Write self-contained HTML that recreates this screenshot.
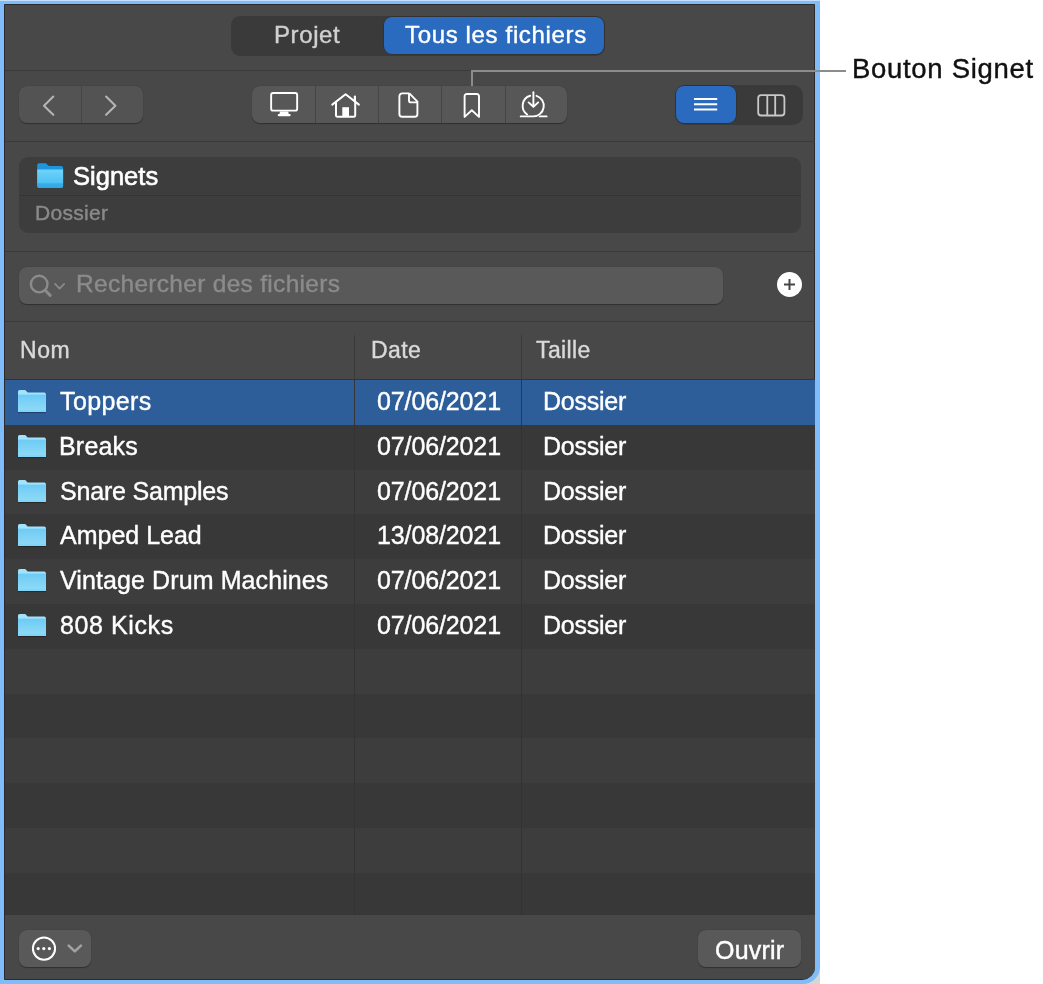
<!DOCTYPE html>
<html><head><meta charset="utf-8">
<style>
*{margin:0;padding:0;box-sizing:border-box}
html,body{width:1043px;height:984px;overflow:hidden;background:#fff;font-family:"Liberation Sans",sans-serif;position:relative}
.a{position:absolute}
.t{position:absolute;white-space:nowrap;line-height:1;will-change:transform;-webkit-text-stroke:0.4px currentColor}
.ic{position:absolute;overflow:visible}
</style></head><body>
<div class="a" style="left:804px;top:966px;width:16px;height:18px;background:#d6d6d6;"></div>
<div class="a" style="left:0px;top:0px;width:820px;height:984px;background:#80bcf9;border-bottom-right-radius:17px"></div>
<div class="a" style="left:0px;top:0px;width:820px;height:1px;background:#c6dffb;"></div>
<div class="a" style="left:4px;top:4px;width:811px;height:976px;background:#484848;border:1px solid #2b2b2b;border-bottom-right-radius:13px"></div>
<div class="a" style="left:231px;top:16px;width:374px;height:40px;background:#3a3a3a;border-radius:9px"></div>
<div class="t" style="left:274px;top:23.28px;font-size:24px;color:#d0d0d0;letter-spacing:0.6px">Projet</div>
<div class="a" style="left:384px;top:17px;width:220px;height:37px;background:#2a6bbf;border-radius:8px;box-shadow:0 0 0 0.5px #2a2a2a"></div>
<div class="t" style="left:404.5px;top:23.28px;font-size:24px;color:#ffffff;letter-spacing:0.65px">Tous les fichiers</div>
<div class="a" style="left:5px;top:70px;width:810px;height:1px;background:#3a3a3a;"></div>
<div class="a" style="left:19px;top:86px;width:124px;height:37px;background:#535353;border-radius:8px;box-shadow:0 0.5px 1px rgba(0,0,0,.35)"></div>
<div class="a" style="left:81px;top:86px;width:1px;height:37px;background:#444444;"></div>
<svg class="ic" style="left:35px;top:88px" width="90" height="34" viewBox="0 0 90 34"><path d="M18.3 8.6L9 17.7L18.3 26.8M71.1 8.6L80.4 17.7L71.1 26.8" fill="none" stroke="#b4b4b4" stroke-width="2.1" stroke-linecap="round" stroke-linejoin="round"/></svg>
<div class="a" style="left:252px;top:86px;width:315px;height:37px;background:#575757;border-radius:8px;box-shadow:0 0.5px 1px rgba(0,0,0,.35)"></div>
<div class="a" style="left:315px;top:86px;width:1px;height:37px;background:#444444;"></div>
<div class="a" style="left:378px;top:86px;width:1px;height:37px;background:#444444;"></div>
<div class="a" style="left:441px;top:86px;width:1px;height:37px;background:#444444;"></div>
<div class="a" style="left:505px;top:86px;width:1px;height:37px;background:#444444;"></div>
<svg class="ic" style="left:268px;top:90px" width="32" height="30" viewBox="0 0 32 30"><rect x="3.15" y="2.95" width="26" height="17.7" rx="2" fill="none" stroke="#fff" stroke-width="1.9"/><path d="M12 21.5h8.2l0.6 3h-9.4z" fill="#fff"/><rect x="9.7" y="24" width="13" height="2.2" rx="1.1" fill="#fff"/></svg>
<svg class="ic" style="left:326px;top:88px" width="40" height="34" viewBox="0 0 40 34"><path d="M6.3 16.6L19.6 6.3L32.9 16.6" fill="none" stroke="#fff" stroke-width="2" stroke-linecap="round" stroke-linejoin="round"/><path d="M28.9 8.6v4" stroke="#fff" stroke-width="2.2" stroke-linecap="round"/><path d="M10 13.5V27.6a1.1 1.1 0 0 0 1.1 1.1h17a1.1 1.1 0 0 0 1.1-1.1V13.5" fill="none" stroke="#fff" stroke-width="2"/><rect x="16.3" y="19.2" width="6.7" height="9" fill="#fff"/></svg>
<svg class="ic" style="left:398px;top:92px" width="22" height="28" viewBox="0 0 22 28"><path d="M11.4 1.4H4.2A2.8 2.8 0 0 0 1.4 4.2V22A2.8 2.8 0 0 0 4.2 24.8H16.6A2.8 2.8 0 0 0 19.4 22V9.6L11.4 1.4" fill="none" stroke="#fff" stroke-width="1.9" stroke-linejoin="round"/><path d="M11 1.8V8.4A2 2 0 0 0 13 10.4H19.4" fill="none" stroke="#fff" stroke-width="1.9"/></svg>
<svg class="ic" style="left:462px;top:92px" width="20" height="28" viewBox="0 0 20 28"><path d="M2.6 24.9V4.2A2.2 2.2 0 0 1 4.8 2H14.8A2.2 2.2 0 0 1 17 4.2V24.9L9.8 18.2Z" fill="none" stroke="#fff" stroke-width="1.9" stroke-linejoin="round"/></svg>
<svg class="ic" style="left:514px;top:86px" width="40" height="34" viewBox="0 0 40 34"><path d="M19.4 6.3V20.3" stroke="#fff" stroke-width="1.9" stroke-linecap="round"/><path d="M14.6 16.4L19.4 20.8L24.2 16.4" fill="none" stroke="#fff" stroke-width="1.9" stroke-linecap="round" stroke-linejoin="round"/><path d="M6.7 30.4H19.2A10.55 10.55 0 0 0 22.5 9.83" fill="none" stroke="#fff" stroke-width="1.9" stroke-linecap="round"/><path d="M16.2 9.74A10.55 10.55 0 0 0 13.15 28.49" fill="none" stroke="#fff" stroke-width="1.9" stroke-linecap="round"/><path d="M25.6 30.4H32.6" stroke="#fff" stroke-width="1.9" stroke-linecap="round"/></svg>
<div class="a" style="left:675px;top:85px;width:128px;height:40px;background:#3a3a3a;border-radius:10px"></div>
<div class="a" style="left:676px;top:86px;width:60px;height:37px;background:#2a6bbf;border-radius:8px;box-shadow:0 0 0 0.5px #2a2a2a"></div>
<svg class="ic" style="left:690px;top:95px" width="32" height="18" viewBox="0 0 32 18"><path d="M4 4.1H27.2M4 9.35H27.2M4 14.6H27.2" stroke="#fff" stroke-width="2"/></svg>
<svg class="ic" style="left:754px;top:91px" width="34" height="28" viewBox="0 0 34 28"><rect x="4.2" y="4.2" width="26.2" height="20.3" rx="3" fill="none" stroke="#c8c8c8" stroke-width="1.8"/><path d="M13.3 4.2V24.5M21.2 4.2V24.5" stroke="#c8c8c8" stroke-width="1.8"/></svg>
<div class="a" style="left:5px;top:141px;width:810px;height:1px;background:#3a3a3a;"></div>
<div class="a" style="left:19px;top:157px;width:782px;height:76px;background:#3d3d3d;border-radius:9px"></div>
<div class="a" style="left:19px;top:195px;width:782px;height:1px;background:#343434;"></div>
<svg class="ic" style="left:35px;top:161px" width="30" height="30" viewBox="0 0 30 30"><defs><linearGradient id="fg" x1="0" y1="0" x2="0" y2="1"><stop offset="0" stop-color="#6fd4fa"/><stop offset="0.75" stop-color="#4dc0f3"/><stop offset="0.76" stop-color="#39aee8"/><stop offset="1" stop-color="#2fa6e3"/></linearGradient></defs><path d="M2.2 4.2A2 2 0 0 1 4.2 2.2H10.8L13.9 4.9H26.1A2 2 0 0 1 28.1 6.9V25A2 2 0 0 1 26.1 27H4.2A2 2 0 0 1 2.2 25Z" fill="#1d96dd"/><path d="M2.2 8.4H28.1V25A2 2 0 0 1 26.1 27H4.2A2 2 0 0 1 2.2 25Z" fill="url(#fg)"/></svg>
<div class="t" style="left:72.5px;top:163.51px;font-size:25.5px;color:#ffffff;letter-spacing:0.02px;-webkit-text-stroke:0.6px #fff">Signets</div>
<div class="t" style="left:35px;top:202.22px;font-size:21px;color:#8a8a8a;letter-spacing:0.3px">Dossier</div>
<div class="a" style="left:5px;top:251px;width:810px;height:1px;background:#3a3a3a;"></div>
<div class="a" style="left:19px;top:267px;width:704px;height:37px;background:#595959;border-radius:8px;box-shadow:0 0.5px 1px rgba(0,0,0,.35)"></div>
<svg class="ic" style="left:20px;top:268px" width="50" height="34" viewBox="0 0 50 34"><circle cx="19.2" cy="16.1" r="8.3" fill="none" stroke="#8b8b8b" stroke-width="2.4"/><path d="M25.4 22.5L30.2 27.4" stroke="#8b8b8b" stroke-width="3" stroke-linecap="round"/><path d="M35 15.9L39.6 20.6L44.2 15.9" fill="none" stroke="#8b8b8b" stroke-width="1.6" stroke-linecap="round" stroke-linejoin="round"/></svg>
<div class="t" style="left:76px;top:272.06px;font-size:24.5px;color:#8b8b8b;letter-spacing:0.3px">Rechercher des fichiers</div>
<svg class="ic" style="left:775px;top:270px" width="30" height="30" viewBox="0 0 30 30"><circle cx="14.5" cy="14.5" r="12.5" fill="#fff"/><path d="M9 14.5H20M14.5 9V20" stroke="#464646" stroke-width="2"/></svg>
<div class="a" style="left:5px;top:321px;width:810px;height:1px;background:#3a3a3a;"></div>
<div class="a" style="left:354px;top:335px;width:1px;height:45px;background:#3a3a3a;"></div>
<div class="a" style="left:521px;top:335px;width:1px;height:45px;background:#3a3a3a;"></div>
<div class="t" style="left:20px;top:338.73px;font-size:23px;color:#d9d9d9;letter-spacing:0.6px">Nom</div>
<div class="t" style="left:371px;top:338.73px;font-size:23px;color:#d9d9d9;letter-spacing:0.4px">Date</div>
<div class="t" style="left:536px;top:338.73px;font-size:23px;color:#d9d9d9;letter-spacing:0.4px">Taille</div>
<div class="a" style="left:5px;top:379px;width:810px;height:1px;background:#333333;"></div>
<div class="a" style="left:5px;top:380px;width:810px;height:45px;background:#2d5e99;"></div>
<div class="a" style="left:354px;top:380px;width:1px;height:45px;background:#363636;"></div>
<div class="a" style="left:521px;top:380px;width:1px;height:45px;background:#363636;"></div>
<svg class="ic" style="left:16px;top:388px" width="32" height="27" viewBox="0 0 32 27"><defs><linearGradient id="rg" x1="0" y1="0" x2="0" y2="1"><stop offset="0" stop-color="#6ccbf5"/><stop offset="1" stop-color="#92dbf7"/></linearGradient></defs><path d="M2.2 24.6H29.7" stroke="rgba(0,0,0,0.35)" stroke-width="1"/><path d="M2 3.6A1.6 1.6 0 0 1 3.6 2H9.2L11.7 4.6H28.3A1.6 1.6 0 0 1 29.9 6.2V24H2Z" fill="#a2e2fb"/><path d="M2 6.6H29.9V24H2Z" fill="url(#rg)"/><path d="M2 21.9H29.9V24H2Z" fill="#7dd7f9"/></svg>
<div class="t" style="left:60px;top:389.44px;font-size:25px;color:#fff;letter-spacing:0.4px">Toppers</div>
<div class="t" style="left:377px;top:389.44px;font-size:25px;color:#fff;letter-spacing:-0.12px">07/06/2021</div>
<div class="t" style="left:543px;top:389.44px;font-size:25px;color:#fff;letter-spacing:-0.25px">Dossier</div>
<div class="a" style="left:5px;top:425px;width:810px;height:45px;background:#383838;"></div>
<div class="a" style="left:354px;top:425px;width:1px;height:45px;background:#333333;"></div>
<div class="a" style="left:521px;top:425px;width:1px;height:45px;background:#333333;"></div>
<svg class="ic" style="left:16px;top:433px" width="32" height="27" viewBox="0 0 32 27"><path d="M2.2 24.6H29.7" stroke="rgba(0,0,0,0.35)" stroke-width="1"/><path d="M2 3.6A1.6 1.6 0 0 1 3.6 2H9.2L11.7 4.6H28.3A1.6 1.6 0 0 1 29.9 6.2V24H2Z" fill="#a2e2fb"/><path d="M2 6.6H29.9V24H2Z" fill="url(#rg)"/><path d="M2 21.9H29.9V24H2Z" fill="#7dd7f9"/></svg>
<div class="t" style="left:59px;top:434.44px;font-size:25px;color:#fff;letter-spacing:0.2px">Breaks</div>
<div class="t" style="left:377px;top:434.44px;font-size:25px;color:#fff;letter-spacing:-0.12px">07/06/2021</div>
<div class="t" style="left:543px;top:434.44px;font-size:25px;color:#fff;letter-spacing:-0.25px">Dossier</div>
<div class="a" style="left:5px;top:470px;width:810px;height:44px;background:#3d3d3d;"></div>
<div class="a" style="left:354px;top:470px;width:1px;height:44px;background:#333333;"></div>
<div class="a" style="left:521px;top:470px;width:1px;height:44px;background:#333333;"></div>
<svg class="ic" style="left:16px;top:478px" width="32" height="27" viewBox="0 0 32 27"><path d="M2.2 24.6H29.7" stroke="rgba(0,0,0,0.35)" stroke-width="1"/><path d="M2 3.6A1.6 1.6 0 0 1 3.6 2H9.2L11.7 4.6H28.3A1.6 1.6 0 0 1 29.9 6.2V24H2Z" fill="#a2e2fb"/><path d="M2 6.6H29.9V24H2Z" fill="url(#rg)"/><path d="M2 21.9H29.9V24H2Z" fill="#7dd7f9"/></svg>
<div class="t" style="left:60px;top:479.44px;font-size:25px;color:#fff;letter-spacing:-0.2px">Snare Samples</div>
<div class="t" style="left:377px;top:479.44px;font-size:25px;color:#fff;letter-spacing:-0.12px">07/06/2021</div>
<div class="t" style="left:543px;top:479.44px;font-size:25px;color:#fff;letter-spacing:-0.25px">Dossier</div>
<div class="a" style="left:5px;top:514px;width:810px;height:45px;background:#383838;"></div>
<div class="a" style="left:354px;top:514px;width:1px;height:45px;background:#333333;"></div>
<div class="a" style="left:521px;top:514px;width:1px;height:45px;background:#333333;"></div>
<svg class="ic" style="left:16px;top:522px" width="32" height="27" viewBox="0 0 32 27"><path d="M2.2 24.6H29.7" stroke="rgba(0,0,0,0.35)" stroke-width="1"/><path d="M2 3.6A1.6 1.6 0 0 1 3.6 2H9.2L11.7 4.6H28.3A1.6 1.6 0 0 1 29.9 6.2V24H2Z" fill="#a2e2fb"/><path d="M2 6.6H29.9V24H2Z" fill="url(#rg)"/><path d="M2 21.9H29.9V24H2Z" fill="#7dd7f9"/></svg>
<div class="t" style="left:60px;top:523.44px;font-size:25px;color:#fff;letter-spacing:0px">Amped Lead</div>
<div class="t" style="left:377px;top:523.44px;font-size:25px;color:#fff;letter-spacing:-0.12px">13/08/2021</div>
<div class="t" style="left:543px;top:523.44px;font-size:25px;color:#fff;letter-spacing:-0.25px">Dossier</div>
<div class="a" style="left:5px;top:559px;width:810px;height:45px;background:#3d3d3d;"></div>
<div class="a" style="left:354px;top:559px;width:1px;height:45px;background:#333333;"></div>
<div class="a" style="left:521px;top:559px;width:1px;height:45px;background:#333333;"></div>
<svg class="ic" style="left:16px;top:567px" width="32" height="27" viewBox="0 0 32 27"><path d="M2.2 24.6H29.7" stroke="rgba(0,0,0,0.35)" stroke-width="1"/><path d="M2 3.6A1.6 1.6 0 0 1 3.6 2H9.2L11.7 4.6H28.3A1.6 1.6 0 0 1 29.9 6.2V24H2Z" fill="#a2e2fb"/><path d="M2 6.6H29.9V24H2Z" fill="url(#rg)"/><path d="M2 21.9H29.9V24H2Z" fill="#7dd7f9"/></svg>
<div class="t" style="left:60px;top:568.44px;font-size:25px;color:#fff;letter-spacing:0.1px">Vintage Drum Machines</div>
<div class="t" style="left:377px;top:568.44px;font-size:25px;color:#fff;letter-spacing:-0.12px">07/06/2021</div>
<div class="t" style="left:543px;top:568.44px;font-size:25px;color:#fff;letter-spacing:-0.25px">Dossier</div>
<div class="a" style="left:5px;top:604px;width:810px;height:45px;background:#383838;"></div>
<div class="a" style="left:354px;top:604px;width:1px;height:45px;background:#333333;"></div>
<div class="a" style="left:521px;top:604px;width:1px;height:45px;background:#333333;"></div>
<svg class="ic" style="left:16px;top:612px" width="32" height="27" viewBox="0 0 32 27"><path d="M2.2 24.6H29.7" stroke="rgba(0,0,0,0.35)" stroke-width="1"/><path d="M2 3.6A1.6 1.6 0 0 1 3.6 2H9.2L11.7 4.6H28.3A1.6 1.6 0 0 1 29.9 6.2V24H2Z" fill="#a2e2fb"/><path d="M2 6.6H29.9V24H2Z" fill="url(#rg)"/><path d="M2 21.9H29.9V24H2Z" fill="#7dd7f9"/></svg>
<div class="t" style="left:60px;top:613.44px;font-size:25px;color:#fff;letter-spacing:0.6px">808 Kicks</div>
<div class="t" style="left:377px;top:613.44px;font-size:25px;color:#fff;letter-spacing:-0.12px">07/06/2021</div>
<div class="t" style="left:543px;top:613.44px;font-size:25px;color:#fff;letter-spacing:-0.25px">Dossier</div>
<div class="a" style="left:5px;top:649px;width:810px;height:45px;background:#3d3d3d;"></div>
<div class="a" style="left:354px;top:649px;width:1px;height:45px;background:#333333;"></div>
<div class="a" style="left:521px;top:649px;width:1px;height:45px;background:#333333;"></div>
<div class="a" style="left:5px;top:694px;width:810px;height:44px;background:#383838;"></div>
<div class="a" style="left:354px;top:694px;width:1px;height:44px;background:#333333;"></div>
<div class="a" style="left:521px;top:694px;width:1px;height:44px;background:#333333;"></div>
<div class="a" style="left:5px;top:738px;width:810px;height:45px;background:#3d3d3d;"></div>
<div class="a" style="left:354px;top:738px;width:1px;height:45px;background:#333333;"></div>
<div class="a" style="left:521px;top:738px;width:1px;height:45px;background:#333333;"></div>
<div class="a" style="left:5px;top:783px;width:810px;height:45px;background:#383838;"></div>
<div class="a" style="left:354px;top:783px;width:1px;height:45px;background:#333333;"></div>
<div class="a" style="left:521px;top:783px;width:1px;height:45px;background:#333333;"></div>
<div class="a" style="left:5px;top:828px;width:810px;height:45px;background:#3d3d3d;"></div>
<div class="a" style="left:354px;top:828px;width:1px;height:45px;background:#333333;"></div>
<div class="a" style="left:521px;top:828px;width:1px;height:45px;background:#333333;"></div>
<div class="a" style="left:5px;top:873px;width:810px;height:45px;background:#383838;"></div>
<div class="a" style="left:354px;top:873px;width:1px;height:45px;background:#333333;"></div>
<div class="a" style="left:521px;top:873px;width:1px;height:45px;background:#333333;"></div>
<div class="a" style="left:5px;top:915px;width:810px;height:64px;background:#484848;border-bottom-right-radius:12px"></div>
<div class="a" style="left:19px;top:930px;width:72px;height:37px;background:#595959;border-radius:8px;box-shadow:0 0.5px 1px rgba(0,0,0,.35)"></div>
<svg class="ic" style="left:28px;top:932px" width="60" height="34" viewBox="0 0 60 34"><circle cx="16" cy="16.6" r="11.1" fill="none" stroke="#fff" stroke-width="2"/><circle cx="10.2" cy="16.6" r="1.6" fill="#fff"/><circle cx="15.8" cy="16.6" r="1.6" fill="#fff"/><circle cx="21.4" cy="16.6" r="1.6" fill="#fff"/><path d="M40.7 13.6L46.8 19.4L52.9 13.6" fill="none" stroke="#a2a2a2" stroke-width="2.6" stroke-linecap="round" stroke-linejoin="round"/></svg>
<div class="a" style="left:698px;top:930px;width:103px;height:37px;background:#595959;border-radius:8px;box-shadow:0 0.5px 1px rgba(0,0,0,.35)"></div>
<div class="t" style="left:715px;top:937.84px;font-size:25px;color:#fff;letter-spacing:0.2px">Ouvrir</div>
<div class="a" style="left:471px;top:70px;width:2px;height:16px;background:#8c8c8c;"></div>
<div class="a" style="left:471px;top:70px;width:375px;height:2px;background:#8c8c8c;"></div>
<div class="t" style="left:852px;top:54.92px;font-size:27.5px;color:#111;letter-spacing:0.7px">Bouton Signet</div>
</body></html>
